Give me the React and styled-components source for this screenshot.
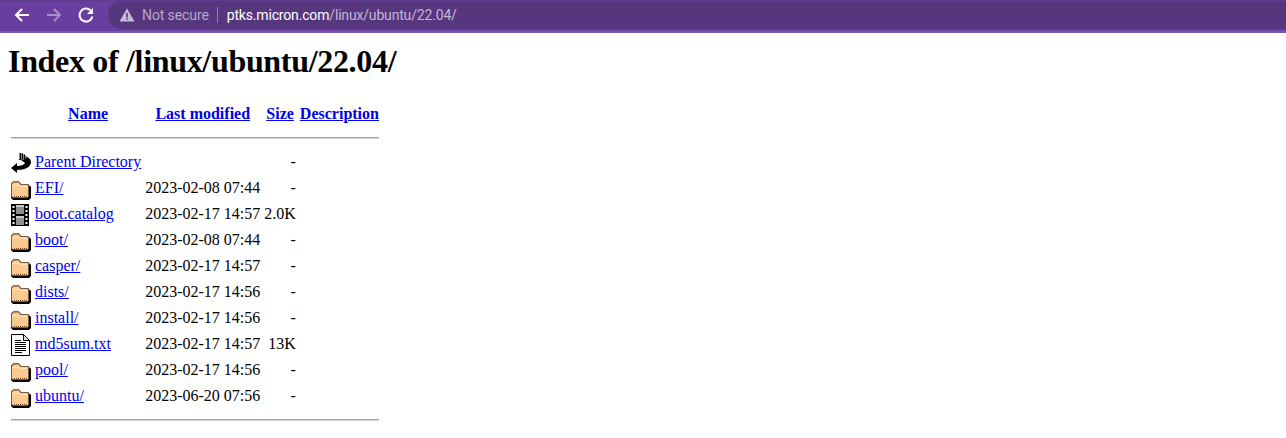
import React from 'react'
import styled, { createGlobalStyle } from 'styled-components'

const Global = createGlobalStyle`
  html, body {
    margin: 0;
    padding: 0;
    background: #fff;
  }
  body {
    font-family: "Liberation Serif", "Times New Roman", serif;
    font-size: 16px;
    color: #000;
    overflow: hidden;
  }
`

const Toolbar = styled.div`
  display: flex;
  align-items: flex-start;
  height: 30px;
  background: #6a3ea1;
  border-top: 1px solid #5f3a90;
  border-bottom: 2px solid #7b58ae;
`

const NavButton = styled.button`
  display: flex;
  align-items: center;
  justify-content: center;
  width: 32px;
  height: 28px;
  padding: 0;
  border: 0;
  background: none;
  color: ${(p) => (p.$dim ? '#a98fcb' : '#fff')};
`

const NavGroup = styled.div`
  display: flex;
  align-items: center;
  padding-left: 6px;
  width: 108px;
  box-sizing: border-box;
`

const Omnibox = styled.div`
  flex: 1;
  display: flex;
  align-items: center;
  height: 28px;
  padding-left: 11px;
  border-radius: 14px 0 0 14px;
  background: #56377e;
  font-family: Roboto, "Liberation Sans", sans-serif;
  font-size: 14px;
`

const NotSecure = styled.span`
  margin-left: 7px;
  letter-spacing: -0.1px;
  color: #b5a7c9;
`

const Divider = styled.span`
  width: 1px;
  height: 16px;
  margin: 0 9px 0 8px;
  background: #8f7aad;
`

const Host = styled.span`
  letter-spacing: -0.17px;
  color: #fff;
`

const UrlPath = styled.span`
  letter-spacing: -0.17px;
  color: #c3b6d6;
`

const Main = styled.main`
  padding: 0 8px;
`

const Title = styled.h1`
  margin: 10px 0 21px;
  font-size: 32px;
  font-weight: bold;
  line-height: 37px;
  letter-spacing: -0.32px;
`

const Table = styled.table`
  border-collapse: separate;
  border-spacing: 2px;
`

const HeadCell = styled.th`
  padding: 2px 1px 0;
  vertical-align: top;
  text-align: center;
  font-weight: bold;
`

const Cell = styled.td`
  padding: 2px 1px 0;
  vertical-align: top;
  text-align: ${(p) => (p.$right ? 'right' : 'left')};
  white-space: nowrap;
`

const IconCell = styled.td`
  padding: 1px;
  vertical-align: top;
`

const IconBox = styled.svg`
  display: block;
  width: 20px;
  height: 22px;
`

const Link = styled.a`
  color: #0000ee;
  text-decoration: underline;
`

const Rule = styled.hr`
  margin: ${(p) => (p.$last ? '7px 0' : '7px 0 9px')};
  border: 0;
  border-top: 1px solid #a0a0a0;
  border-bottom: 1px solid #d8d8d8;
`

const RuleCell = styled.th`
  padding: 1px;
  font-weight: normal;
`

const BackIcon = () => (
  <svg width="18" height="18" viewBox="0 0 18 18" fill="none" stroke="currentColor" strokeWidth="2">
    <path d="M16 9H3M9 3 3 9l6 6" />
  </svg>
)

const ForwardIcon = () => (
  <svg width="18" height="18" viewBox="0 0 18 18" fill="none" stroke="currentColor" strokeWidth="2">
    <path d="M2 9h13M9 3l6 6-6 6" />
  </svg>
)

const ReloadIcon = () => (
  <svg width="18" height="18" viewBox="0 0 18 18" fill="none">
    <path d="M13.6 4.4A6.5 6.5 0 1 0 15.4 10.5" stroke="currentColor" strokeWidth="2" />
    <path d="M16 2v6h-6z" fill="currentColor" />
  </svg>
)

const WarningIcon = () => (
  <svg width="16" height="16" viewBox="0 0 16 16">
    <path d="M8 1.5 15.5 14.5H.5z" fill="#c8bdd6" />
    <path d="M7.2 6h1.6v4.4H7.2zM7.2 11.2h1.6v1.6H7.2z" fill="#56377e" />
  </svg>
)

const FolderIcon = () => (
  <IconBox viewBox="0 0 20 22">
    <path d="M0 6 2 3.5h6L10 6h7l3 3v11l-2 2H2l-2-2z" fill="#000" />
    <path d="M.5 6.5 2.2 4h5.6l2 2.5h6.7l1 1v11l-1 1H2l-1.500-1z" fill="#fcc990" stroke="#7d5c3a" />
    <path d="M2 7.5h6l1 1h7" stroke="#ffe4c4" fill="none" />
    <path d="M3 18.500h13" stroke="#7a4a1a" strokeDasharray="1 1" />
  </IconBox>
)

const BackFolderIcon = () => (
  <IconBox viewBox="0 0 20 22">
    <path d="M0 16 6 11v3C10 14 13 13 14 11L10 8H8V4C14 3 20 6 20 10 20 15 14 18 6 18v3z" fill="#000" />
    <path d="M8 1h2c3 1 5 2 6 4l-3 3-5-1z" fill="#8a8a8a" />
    <path d="M9.500 1v6M11.500 1.500v6M13.500 2.500v5" stroke="#000" />
  </IconBox>
)

const FilmIcon = () => (
  <IconBox viewBox="0 0 20 22">
    <path d="M0 0h18v22H0z" fill="#000" />
    <path d="M5 1h8v9H5zM5 12h8v9H5z" fill="#8f8f8f" />
    <path d="M5 1h8v2H5zM5 12h8v2H5z" fill="#c9c9c9" />
    <path
      d="M1.500 2h2v2h-2zM1.500 6h2v2h-2zM1.500 10h2v2h-2zM1.500 14h2v2h-2zM1.500 18h2v2h-2zM14.500 2h2v2h-2zM14.500 6h2v2h-2zM14.500 10h2v2h-2zM14.500 14h2v2h-2zM14.500 18h2v2h-2z"
      fill="#fff"
    />
  </IconBox>
)

const TextIcon = () => (
  <IconBox viewBox="0 0 20 22">
    <path d="M.5.5h12l6 6v15H.5z" fill="#fff" stroke="#000" />
    <path d="M12.500.5v6h6z" fill="#ddd" stroke="#000" />
    <path d="M4 6.500h6M4 8.500h11M4 10.500h11M4 12.500h11M4 14.500h11M4 16.500h11M4 18.500h7" stroke="#000" />
  </IconBox>
)

const rows = [
  { icon: FolderIcon, name: 'EFI/', date: '2023-02-08 07:44', size: '-' },
  { icon: FilmIcon, name: 'boot.catalog', date: '2023-02-17 14:57', size: '2.0K' },
  { icon: FolderIcon, name: 'boot/', date: '2023-02-08 07:44', size: '-' },
  { icon: FolderIcon, name: 'casper/', date: '2023-02-17 14:57', size: '-' },
  { icon: FolderIcon, name: 'dists/', date: '2023-02-17 14:56', size: '-' },
  { icon: FolderIcon, name: 'install/', date: '2023-02-17 14:56', size: '-' },
  { icon: TextIcon, name: 'md5sum.txt', date: '2023-02-17 14:57', size: '13K' },
  { icon: FolderIcon, name: 'pool/', date: '2023-02-17 14:56', size: '-' },
  { icon: FolderIcon, name: 'ubuntu/', date: '2023-06-20 07:56', size: '-' },
]

function App() {
  return (
    <>
      <Global />
      <Toolbar>
        <NavGroup>
          <NavButton><BackIcon /></NavButton>
          <NavButton $dim><ForwardIcon /></NavButton>
          <NavButton><ReloadIcon /></NavButton>
        </NavGroup>
        <Omnibox>
          <WarningIcon />
          <NotSecure>Not secure</NotSecure>
          <Divider />
          <Host>ptks.micron.com</Host>
          <UrlPath>/linux/ubuntu/22.04/</UrlPath>
        </Omnibox>
      </Toolbar>
      <Main>
        <Title>Index of /linux/ubuntu/22.04/</Title>
        <Table>
          <tbody>
            <tr>
              <IconCell><IconBox as="div" /></IconCell>
              <HeadCell><Link href="#">Name</Link></HeadCell>
              <HeadCell><Link href="#">Last modified</Link></HeadCell>
              <HeadCell><Link href="#">Size</Link></HeadCell>
              <HeadCell><Link href="#">Description</Link></HeadCell>
            </tr>
            <tr>
              <RuleCell colSpan="5"><Rule /></RuleCell>
            </tr>
            <tr>
              <IconCell><BackFolderIcon /></IconCell>
              <Cell><Link href="#">Parent Directory</Link></Cell>
              <Cell />
              <Cell $right>-</Cell>
              <Cell />
            </tr>
            {rows.map((row) => (
              <tr key={row.name}>
                <IconCell><row.icon /></IconCell>
                <Cell><Link href="#">{row.name}</Link></Cell>
                <Cell $right>{row.date}</Cell>
                <Cell $right>{row.size}</Cell>
                <Cell />
              </tr>
            ))}
            <tr>
              <RuleCell colSpan="5"><Rule $last /></RuleCell>
            </tr>
          </tbody>
        </Table>
      </Main>
    </>
  )
}

export default App
